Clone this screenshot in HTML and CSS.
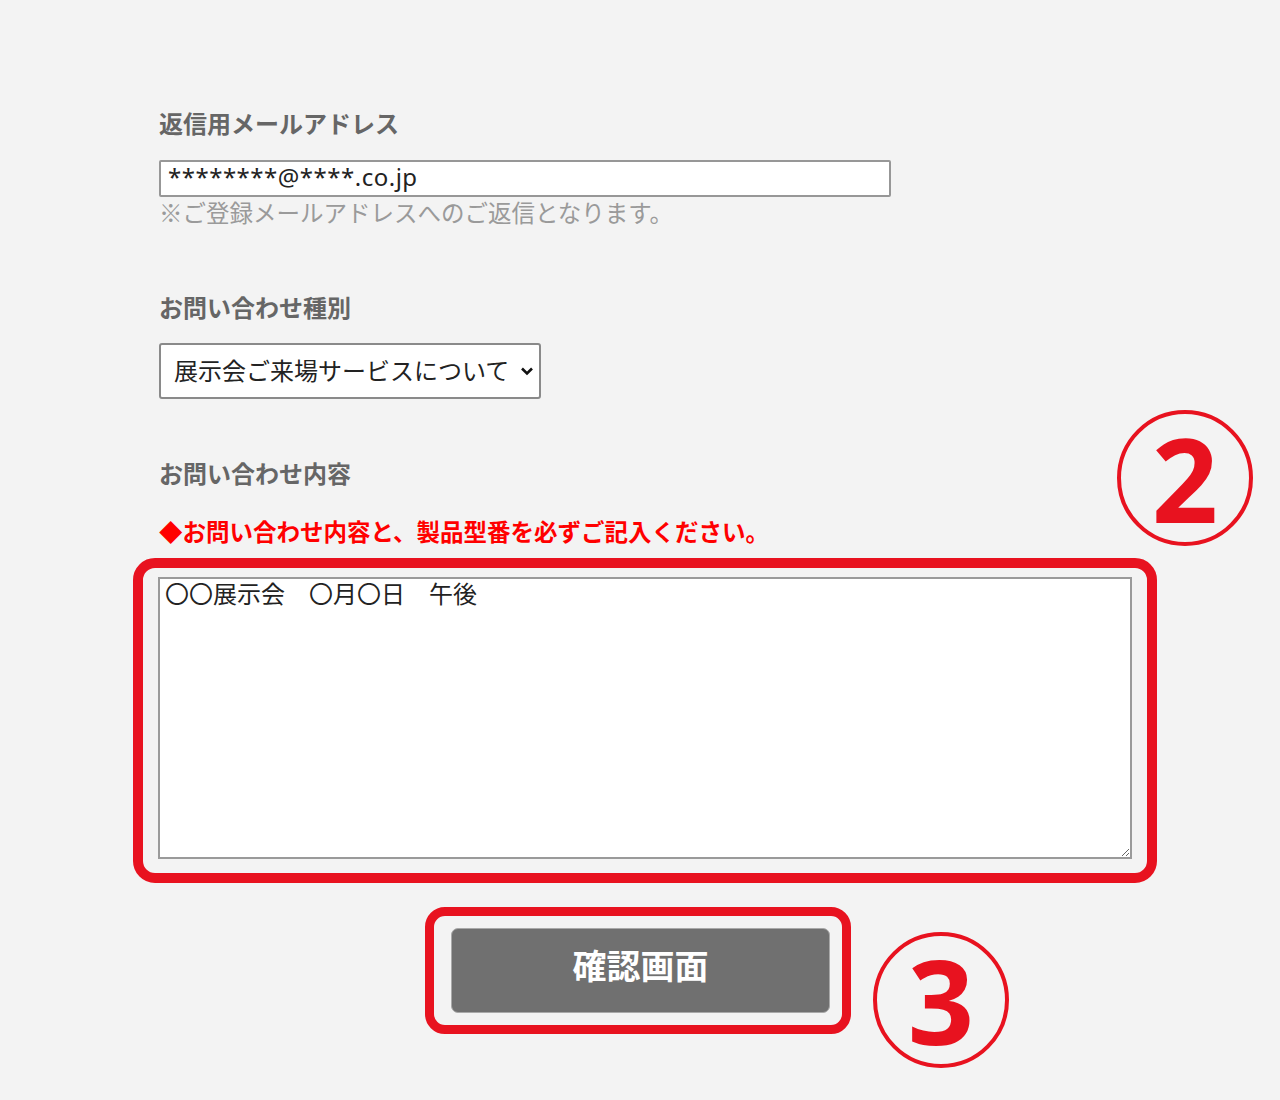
FILE: index.html
```html
<!DOCTYPE html>
<html lang="ja">

<head>
    <meta charset="UTF-8">
    <title>お問い合わせ</title>
    <link rel="stylesheet" href="styles.css">
</head>

<body>
    <div class="page">
        <div class="fields">
            <div class="field">
                <p class="field-label">返信用メールアドレス</p>
                <input class="text-input" type="text" value="********@****.co.jp">
                <p class="field-hint">※ご登録メールアドレスへのご返信となります。</p>
            </div>

            <div class="field field-type">
                <p class="field-label">お問い合わせ種別</p>
                <div class="select-wrap">
                    <select class="select-input">
                        <option>展示会ご来場サービスについて</option>
                    </select>
                    <svg class="select-arrow" width="14" height="10" viewBox="0 0 14 10">
                        <path d="M2 2.5 L7 7.5 L12 2.5" fill="none" stroke="#111" stroke-width="2.6" />
                    </svg>
                </div>
            </div>

            <div class="field field-body">
                <p class="field-label">お問い合わせ内容</p>
                <p class="field-note">◆お問い合わせ内容と、製品型番を必ずご記入ください。</p>
                <div class="mark-frame body-frame">
                    <textarea class="text-area">〇〇展示会　〇月〇日　午後</textarea>
                </div>
            </div>
        </div>

        <div class="actions">
            <div class="mark-frame button-frame">
                <button class="submit-btn" type="button">確認画面</button>
            </div>
        </div>

        <div class="step-mark step-2">2</div>
        <div class="step-mark step-3">3</div>
    </div>
</body>

</html>
```

FILE: styles.css
```css
* {
    padding: 0;
    margin: 0;
    box-sizing: border-box;
}

body {
    background: #f3f3f3;
    font-family: "Noto Sans CJK JP", "Noto Sans", sans-serif;
    color: #333;
}

.page {
    position: relative;
    width: 1280px;
    height: 1100px;
    padding-top: 106px;
}

.fields {
    padding-left: 159px;
}

.field-label {
    font-size: 24px;
    line-height: 34px;
    font-weight: bold;
    color: #666;
}

.text-input {
    display: block;
    margin-top: 20px;
    width: 732px;
    height: 37px;
    padding: 0 7px 4px;
    border: 2px solid #979797;
    border-radius: 2px;
    background: #fff;
    font-family: "Noto Sans", "Noto Sans CJK JP", sans-serif;
    font-size: 24px;
    letter-spacing: 0.5px;
    color: #222;
}

.field-hint {
    font-size: 23.5px;
    line-height: 30px;
    color: #9a9a9a;
}

.field-type {
    margin-top: 63px;
}

.select-wrap {
    position: relative;
    margin-top: 19px;
    width: 382px;
}

.select-input {
    display: block;
    width: 382px;
    height: 56px;
    padding: 0 24px 4px 13px;
    border: 2px solid #8a8a8a;
    border-radius: 3px;
    background: #fff;
    font-family: "Noto Sans CJK JP", sans-serif;
    font-size: 24px;
    color: #222;
    appearance: none;
    -webkit-appearance: none;
}

.select-arrow {
    position: absolute;
    right: 7px;
    top: 23px;
    pointer-events: none;
}

.field-body {
    margin-top: 57px;
}

.field-note {
    margin-top: 25px;
    font-size: 23.5px;
    line-height: 32px;
    font-weight: bold;
    color: #f00;
}

.mark-frame {
    border: 10px solid #e8121f;
    border-radius: 22px;
}

.body-frame {
    margin: 11px 0 0 -26px;
    width: 1024px;
    height: 325px;
    padding: 9px 15px 0;
}

.text-area {
    display: block;
    width: 974px;
    height: 282px;
    padding: 0 5px;
    border: 2px solid #9a9a9a;
    background: #fff;
    font-family: "Noto Sans CJK JP", sans-serif;
    font-size: 24px;
    line-height: 27px;
    color: #222;
    resize: both;
}

.actions {
    display: flex;
    justify-content: center;
    margin-top: 24px;
    padding-right: 4px;
}

.button-frame {
    width: 426px;
    height: 127px;
    border-width: 9px;
    border-radius: 20px;
    padding: 12px 12px 0 17px;
}

.submit-btn {
    display: block;
    width: 379px;
    height: 85px;
    padding-bottom: 13px;
    border: 1px solid #a9a9a9;
    border-radius: 7px;
    background: #707070;
    font-family: "Noto Sans CJK JP", sans-serif;
    font-size: 34px;
    font-weight: bold;
    color: #fff;
    cursor: pointer;
}

.step-mark {
    position: absolute;
    display: flex;
    align-items: center;
    justify-content: center;
    width: 136px;
    height: 136px;
    border: 4px solid #e8121f;
    border-radius: 50%;
    font-family: "Open Sans", "Noto Sans", sans-serif;
    font-size: 116px;
    font-weight: bold;
    line-height: 1;
    color: #e8121f;
}

.step-2 {
    left: 1117px;
    top: 410px;
}

.step-3 {
    left: 873px;
    top: 932px;
}
```
